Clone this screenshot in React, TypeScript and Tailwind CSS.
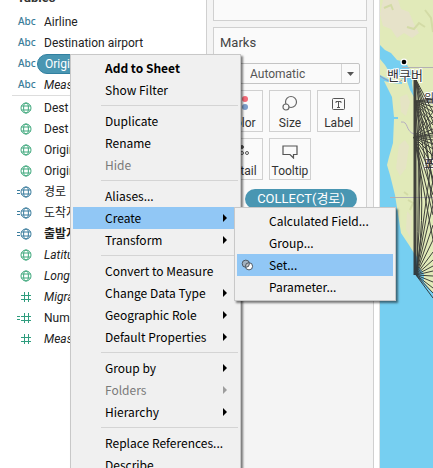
import type { ReactNode } from "react";

const ui = "font-['Roboto','Noto_Sans_CJK_KR',sans-serif]";
const menuFont = "font-['Noto_Sans_CJK_KR',sans-serif]";

type Kind = "abc" | "geo" | "calcGeo" | "num" | "calcNum";
type Field = { kind: Kind; name: string; italic?: boolean; bold?: boolean; selected?: boolean };

const dimensions: Field[] = [
  { kind: "abc", name: "Airline" },
  { kind: "abc", name: "Destination airport" },
  { kind: "abc", name: "Origin airport", selected: true },
  { kind: "abc", name: "Measure Names", italic: true },
];

const measures: Field[] = [
  { kind: "geo", name: "Dest Latitude" },
  { kind: "geo", name: "Dest Longitude" },
  { kind: "geo", name: "Origin Latitude" },
  { kind: "geo", name: "Origin Longitude" },
  { kind: "calcGeo", name: "경로" },
  { kind: "calcGeo", name: "도착지" },
  { kind: "calcGeo", name: "출발지", bold: true },
  { kind: "geo", name: "Latitude", italic: true },
  { kind: "geo", name: "Longitude", italic: true },
  { kind: "num", name: "Migrated Data", italic: true },
  { kind: "calcNum", name: "Number of Records" },
  { kind: "num", name: "Measure Values", italic: true },
];

function Globe({ color }: { color: string }) {
  return (
    <svg width="12" height="12" viewBox="0 0 12 12" fill="none" stroke={color} aria-hidden="true">
      <circle cx="6" cy="6" r="5" />
      <ellipse cx="6" cy="6" rx="2.4" ry="5" />
      <path d="M1.4 4h9.2M1.4 8h9.2" />
    </svg>
  );
}

function Hash() {
  return (
    <svg width="12" height="12" viewBox="0 0 12 12" fill="none" stroke="#2f9d7e" aria-hidden="true">
      <path d="M4.5 1v10M8.500 1v10M1 4.500h10M1 8.500h10" />
    </svg>
  );
}

function FieldIcon({ kind }: { kind: Kind }) {
  if (kind === "abc") {
    return <span className="w-5 pl-px font-['Noto_Sans'] text-[10px] font-medium text-[#3b7d99]">Abc</span>;
  }
  const calc = kind === "calcGeo" || kind === "calcNum";
  return (
    <span className="flex w-5 items-center">
      <svg width="3" height="5" viewBox="0 0 3 5" stroke={kind === "calcGeo" ? "#3b7d9e" : "#2f9d7e"} aria-hidden="true">
        {calc && <path d="M0 1.5h3M0 4.5h3" />}
      </svg>
      {kind === "num" || kind === "calcNum" ? <Hash /> : <Globe color={calc ? "#3b7d9e" : "#41a97e"} />}
    </span>
  );
}

function FieldRow({ field }: { field: Field }) {
  return (
    <li className="flex h-[21px] items-center pl-[17px] text-xs text-[#222]">
      <FieldIcon kind={field.kind} />
      <button
        className={`h-5 flex-1 overflow-hidden pl-[7px] text-left whitespace-nowrap ${field.italic ? "italic" : ""} ${field.bold ? "font-bold" : ""} ${field.selected ? "rounded-full border border-[#3280a0] bg-[#4996b2] pl-[6px] text-white" : ""}`}
      >
        {field.name}
      </button>
    </li>
  );
}

function MarkButton({ label, children }: { label: string; children: ReactNode }) {
  return (
    <button className="flex h-[42px] flex-col items-center justify-end border border-[#d0d0d0] bg-[#fafafa] text-xs leading-[16px] text-[#333]">
      {children}
      {label}
    </button>
  );
}

type Item = { label: string; sub?: boolean; active?: boolean; off?: boolean; strong?: boolean; icon?: boolean };

const groups: Item[][] = [
  [{ label: "Add to Sheet", strong: true }, { label: "Show Filter" }],
  [{ label: "Duplicate" }, { label: "Rename" }, { label: "Hide", off: true }],
  [{ label: "Aliases..." }, { label: "Create", sub: true, active: true }, { label: "Transform", sub: true }],
  [
    { label: "Convert to Measure" },
    { label: "Change Data Type", sub: true },
    { label: "Geographic Role", sub: true },
    { label: "Default Properties", sub: true },
  ],
  [{ label: "Group by", sub: true }, { label: "Folders", sub: true, off: true }, { label: "Hierarchy", sub: true }],
  [{ label: "Replace References..." }, { label: "Describe..." }],
];

const createItems: Item[] = [
  { label: "Calculated Field..." },
  { label: "Group..." },
  { label: "Set...", active: true, icon: true },
  { label: "Parameter..." },
];

function MenuItem({ item }: { item: Item }) {
  return (
    <button
      role="menuitem"
      disabled={item.off}
      className={`flex h-[22px] w-full items-center pr-[11px] text-left text-xs whitespace-nowrap ${item.active ? "bg-[#91c7f5]" : ""} ${item.off ? "text-[#7a7a7a]" : "text-black"} ${item.strong ? "font-bold" : ""}`}
    >
      <span className="flex w-8 shrink-0 pl-1">
        {item.icon && (
          <svg width="13" height="12" viewBox="0 0 13 12" aria-hidden="true">
            <circle cx="8" cy="7.3" r="3.6" fill="#fff" />
            <circle cx="4.8" cy="4.7" r="3.6" fill="#aaa" fillOpacity=".7" />
            <g fill="none" stroke="#4c5865">
              <circle cx="4.8" cy="4.7" r="3.6" />
              <circle cx="8" cy="7.3" r="3.6" />
            </g>
          </svg>
        )}
      </span>
      <span className="flex-1">{item.label}</span>
      {item.sub && (
        <svg width="4" height="8" viewBox="0 0 4 8" fill="currentColor" className={item.off ? "opacity-70" : ""} aria-hidden="true">
          <path d="M0 0l4 4-4 4z" />
        </svg>
      )}
    </button>
  );
}

const routes = [
  { x: 35, y: 78, ends: [112, 122, 134, 150, 185] },
  { x: 35, y: 101, ends: [99, 101, 103, 107, 112, 118, 125, 134, 145, 160, 180, 205] },
  { x: 34, y: 137, ends: [112, 122, 129, 133, 135, 137, 140, 144, 149, 156, 165, 178, 195, 215, 240] },
  { x: 36, y: 275, ends: [150, 180, 205, 225, 240, 252, 260, 266, 271, 276, 282, 288, 293, 298] },
];

function MapView() {
  return (
    <svg className="h-full w-full" viewBox="0 0 53 468" preserveAspectRatio="xMinYMin slice" role="img" aria-label="Map">
      <rect width="53" height="468" fill="#e1eab9" />
      <path d="M3 0h15l3 9 8 3 5 12 5 9-7 5-8-5-7 5-6-9-8-3-3-12z" fill="#e6e2c9" />
      <path d="M20 97l7-3 3 8-4 14-5-4zM19 145l6-5 4 6-3 22-6 8-4-8zM27 211l5 6-2 20-4-8z" fill="#e5e4c4" />
      <path d="M4 8l7-3 2 5M27 27l7 2 5-6 6 4M45 10l6 8 2 14M28 200l5 3-3 7M24 192l4 3" fill="none" stroke="#d3dba6" strokeWidth="2" />
      <path d="M0 45l5 5 6 3 6 7 8 2 4 6 4 5-1 10 2 14-4-7-3-9-8-4-9-4-5-8-5-6zM0 75l10 5 12 2v2l-10-1-8-2 4 8 4 8 2 20h4v2h-4l-1 24-4 14-2 8 3 10 5 20 6 38 8 12 5 8 4 5v8l6 8v8l6 8 5 4V468H0z" fill="#76cff1" />
      <path d="M0 76c7 5 17 9 22 4" fill="none" stroke="#9d95ad" />
      <path d="M22 67.500h31M10 197.500h43" stroke="#b3b0b3" />
      <path d="M21 122c8-1 4 9 13 12" fill="none" stroke="#b5adc0" />
      <g fontSize="11" fill="#333" fontFamily="Noto Sans CJK KR, sans-serif" stroke="#fff" strokeWidth="2" paintOrder="stroke">
        <text x="44" y="102">워</text>
        <text x="44" y="168">포</text>
      </g>
      <g stroke="#2a2a2a" fill="none" opacity=".88">
        <path d="M35 77V275" strokeWidth="3" />
        <path d="M38 85Q39 190 37 275M35 101Q44 190 36 275M35 137Q48 200 36 275" />
        {routes.map((r) => r.ends.map((end) => <path key={`${r.y}-${end}`} d={`M${r.x} ${r.y}L53 ${end}`} />))}
      </g>
      <circle cx="24" cy="62" r="3.500" fill="#fff" />
      <circle cx="24" cy="62" r="2.300" fill="#000" />
      <text x="7" y="80" fontSize="13" fill="#333" stroke="#fff" strokeWidth="2" paintOrder="stroke" fontFamily="Noto Sans CJK KR, sans-serif">밴쿠버</text>
    </svg>
  );
}

export default function App() {
  return (
    <div className={`relative flex h-screen overflow-hidden bg-white ${ui}`}>
      <aside className="flex w-[206px] shrink-0 flex-col overflow-hidden">
        <h2 className="-mt-3 h-[23px] pl-[17px] text-[13px] leading-[19px] font-bold text-[#333]">Tables</h2>
        <ul className="pr-2">
          {dimensions.map((f) => (
            <FieldRow key={f.name} field={f} />
          ))}
        </ul>
        <hr className="mb-px ml-3 border-[#ddd]" />
        <ul className="pr-2">
          {measures.map((f) => (
            <FieldRow key={f.name} field={f} />
          ))}
        </ul>
      </aside>

      <section className="flex w-[168px] shrink-0 flex-col gap-[6px] border-x border-[#d0d0d0] bg-[#f4f4f4] px-[6px]">
        <div className="h-[21px] border border-t-0 border-[#d0d0d0] bg-[#fafafa]" />
        <div className="flex h-[264px] flex-col border border-[#d0d0d0] bg-[#fafafa] px-[6px]">
          <h3 className="mt-[6px] text-[13px] leading-[18px] text-[#444]">Marks</h3>
          <div className="relative mt-[11px] text-[#555]">
            <select aria-label="Mark type" className="block h-[21px] w-full appearance-none rounded-xs border border-[#c4c4c4] bg-[#fafafa] pl-[29px] text-xs">
              <option>Automatic</option>
            </select>
            <span className="pointer-events-none absolute inset-y-px right-px flex w-[18px] items-center justify-center border-l border-[#d4d4d4]">
              <svg width="7" height="4" viewBox="0 0 7 4" fill="#555" aria-hidden="true"><path d="M0 0h7L3.500 4z" /></svg>
            </span>
          </div>
          <div className="mt-[6px] grid grid-cols-3 gap-[6px]">
            <MarkButton label="Color">
              <svg width="16" height="16" viewBox="0 0 16 16" className="mb-1" aria-hidden="true">
                <circle cx="4" cy="4" r="3" fill="#f0b060" />
                <circle cx="12" cy="4" r="3" fill="#f26b78" />
                <circle cx="4" cy="12" r="3" fill="#80b080" />
                <circle cx="12" cy="12" r="3" fill="#7b9dc9" />
              </svg>
            </MarkButton>
            <MarkButton label="Size">
              <svg width="16" height="16" viewBox="0 0 16 16" className="mb-1" fill="#fafafa" stroke="#666" strokeWidth="1.200" aria-hidden="true">
                <circle cx="9" cy="7" r="5.500" />
                <circle cx="4" cy="12" r="3" />
              </svg>
            </MarkButton>
            <MarkButton label="Label">
              <svg width="14" height="14" viewBox="0 0 14 14" className="mb-1" fill="none" stroke="#555" aria-hidden="true">
                <rect x=".5" y="1.500" width="12" height="11" rx="1" />
                <path d="M4 6V4.500h5V6M6.500 4.500v6M5 10.500h3" />
              </svg>
            </MarkButton>
            <MarkButton label="Detail">
              <svg width="16" height="16" viewBox="0 0 16 16" className="mb-1" fill="none" stroke="#555" aria-hidden="true">
                <circle cx="9" cy="4" r="1.500" fill="#555" />
                <circle cx="9" cy="10" r="1.500" />
                <circle cx="14" cy="10" r="1.500" />
              </svg>
            </MarkButton>
            <MarkButton label="Tooltip">
              <svg width="16" height="14" viewBox="0 0 16 14" className="mb-1" fill="none" stroke="#555" strokeWidth="1.200" aria-hidden="true">
                <path d="M1 1h14v8.500h-3.500V13L8 9.500H1z" />
              </svg>
            </MarkButton>
          </div>
          <button className="mt-[9px] mr-[3px] ml-[25px] h-5 rounded-full bg-[#4996b2] text-[13px] leading-5 text-white">COLLECT(경로)</button>
        </div>
      </section>

      <main className="ml-[5px] min-w-0 flex-1 border-l border-[#e0e0e0]">
        <MapView />
      </main>

      <div role="menu" className={`absolute top-[54px] left-[70px] w-[171px] border border-[#c8c8c8] bg-[#f0f0f0] p-[2px] shadow-[2px_2px_2px_rgba(0,0,0,0.5)] ${menuFont}`}>
        {groups.map((g, i) => (
          <div key={i}>
            {i > 0 && <hr className="my-1 ml-7 border-[#d4d4d4]" />}
            {g.map((item) => (
              <MenuItem key={item.label} item={item} />
            ))}
          </div>
        ))}
      </div>
      <div role="menu" className={`absolute top-[207px] left-[234px] w-[162px] border border-[#c8c8c8] bg-[#f0f0f0] p-[2px] shadow-[2px_2px_2px_rgba(0,0,0,0.5)] ${menuFont}`}>
        {createItems.map((item) => (
          <MenuItem key={item.label} item={item} />
        ))}
      </div>
    </div>
  );
}
